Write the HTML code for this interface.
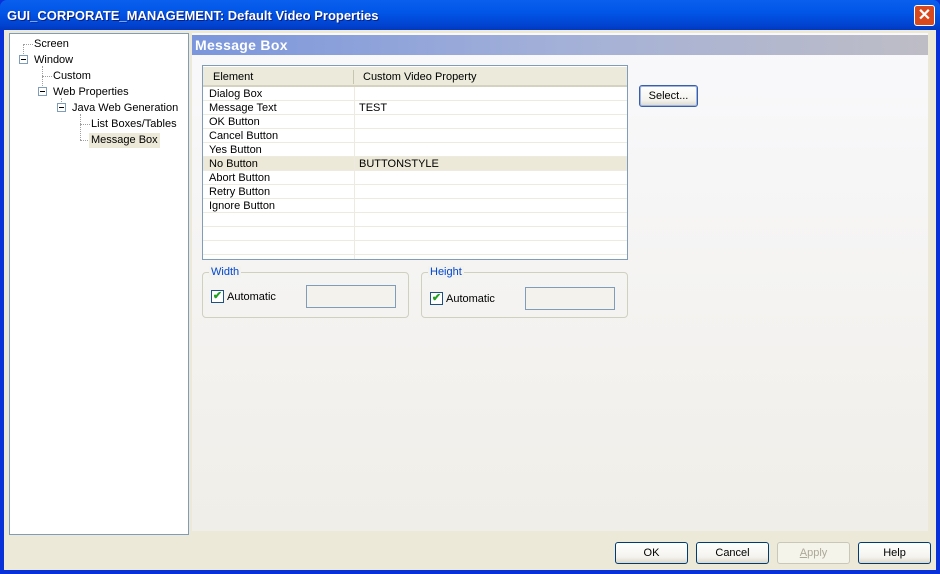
<!DOCTYPE html>
<html><head><style>
*{box-sizing:border-box;margin:0;padding:0}
body{width:940px;height:574px;overflow:hidden;font-family:"Liberation Sans",Tahoma,sans-serif;font-size:11px;color:#000;background:#0831D9;position:relative}
.abs{position:absolute}
#title{left:0;top:0;width:940px;height:30px;background:linear-gradient(#0A5FEE,#0156E8 40%,#0142CF 85%,#0138BD);border-radius:7px 7px 0 0}
#title span{position:absolute;left:7px;top:8px;color:#fff;font-weight:bold;font-size:13px;font-family:"Liberation Sans",sans-serif;text-shadow:1px 1px #0a1f80}
#close{left:914px;top:5px;width:21px;height:21px;background:#D9491E;border:1px solid #fff;border-radius:3px;color:#fff;font-size:16px;font-weight:bold;text-align:center;line-height:19px}
#body{left:4px;top:30px;width:932px;height:540px;background:#ECE9D8}
#tree{left:9px;top:33px;width:180px;height:502px;background:#fff;border:1px solid #7F9DB9}
.t{position:absolute;white-space:nowrap;font-size:11px}
#tree .t{margin-top:1px}
.pm{position:absolute;width:9px;height:9px;border:1px solid #7F9DB9;background:#fff}
.pm:after{content:"";position:absolute;left:1px;top:3px;width:5px;height:1px;background:#000}
.dh{position:absolute;border-top:1px dotted #a0a0a0;height:0}
.dv{position:absolute;border-left:1px dotted #a0a0a0;width:0}
#right{left:192px;top:33px;width:736px;height:498px;background:linear-gradient(#F9F9FC,#F0EEE8)}
#hdr{left:192px;top:35px;width:736px;height:20px;background:linear-gradient(90deg,#7B96DC,#A3B0D8 50%,#BEBDC6);color:#fff;font-weight:bold;font-size:14px;padding:2px 3px;font-family:"Liberation Sans",sans-serif;letter-spacing:0.3px}
#tbl{left:202px;top:65px;width:426px;height:195px;border:1px solid #7F9DB9;background:#fff;overflow:hidden}
.row{position:absolute;left:0;width:424px;height:14px;border-bottom:1px solid #EDEBE0}
.row span{position:absolute;top:1px;line-height:13px}
.btn{position:absolute;height:22px;border:1px solid #003C74;border-radius:3px;background:linear-gradient(#fff,#F4F3EE 70%,#DCD8C8);text-align:center;line-height:21px}
.grp{position:absolute;border:1px solid #D0D0BF;border-radius:4px}
.grp .lg{position:absolute;top:-7px;left:6px;background:#F3F2ED;color:#0046D5;padding:0 2px}
.cb{position:absolute;width:13px;height:13px;border:1px solid #1C5180;background:#fff;color:#21A121;font-size:11px;line-height:11px;text-align:center;font-weight:bold}
.ed{position:absolute;border:1px solid #7F9DB9;background:#F3F2ED}
</style></head><body>
<div id="title" class="abs"><span>GUI_CORPORATE_MANAGEMENT: Default Video Properties</span></div>
<div id="close" class="abs">✕</div>
<div id="body" class="abs"></div>
<div id="tree" class="abs">
 <div class="dh" style="left:13px;top:10px;width:10px"></div>
 <div class="dv" style="left:13px;top:10px;height:16px"></div>
 <div class="t" style="left:24px;top:3px">Screen</div>
 <div class="pm" style="left:9px;top:21px"></div>
 <div class="t" style="left:24px;top:19px">Window</div>
 <div class="dv" style="left:32px;top:32px;height:28px"></div>
 <div class="dh" style="left:32px;top:42px;width:10px"></div>
 <div class="t" style="left:43px;top:35px">Custom</div>
 <div class="pm" style="left:28px;top:53px"></div>
 <div class="t" style="left:43px;top:51px">Web Properties</div>
 <div class="dv" style="left:51px;top:64px;height:6px"></div>
 <div class="pm" style="left:47px;top:69px"></div>
 <div class="t" style="left:62px;top:67px">Java Web Generation</div>
 <div class="dv" style="left:70px;top:80px;height:26px"></div>
 <div class="dh" style="left:70px;top:90px;width:10px"></div>
 <div class="dh" style="left:70px;top:106px;width:10px"></div>
 <div class="t" style="left:81px;top:83px">List Boxes/Tables</div>
 <div class="t" style="left:79px;top:98px;background:#ECE9D8;padding:0 2px;height:15px;line-height:15px">Message Box</div>
</div>
<div id="right" class="abs"></div>
<div id="hdr" class="abs">Message Box</div>
<div id="tbl" class="abs">
 <div style="position:absolute;left:0;top:1px;width:424px;height:20px;background:#EBEADB;border-bottom:2px solid #D6D2C2"></div>
 <div style="position:absolute;left:150px;top:4px;width:1px;height:14px;background:#C7C5B2"></div>
 <span class="t" style="left:10px;top:5px">Element</span>
 <span class="t" style="left:160px;top:5px">Custom Video Property</span>
 <div class="row" style="top:21px"><span style="left:6px">Dialog Box</span></div>
 <div class="row" style="top:35px"><span style="left:6px">Message Text</span><span style="left:156px">TEST</span></div>
 <div class="row" style="top:49px"><span style="left:6px">OK Button</span></div>
 <div class="row" style="top:63px"><span style="left:6px">Cancel Button</span></div>
 <div class="row" style="top:77px"><span style="left:6px">Yes Button</span></div>
 <div class="row" style="top:91px;background:#ECE9D8"><span style="left:6px">No Button</span><span style="left:156px">BUTTONSTYLE</span></div>
 <div class="row" style="top:105px"><span style="left:6px">Abort Button</span></div>
 <div class="row" style="top:119px"><span style="left:6px">Retry Button</span></div>
 <div class="row" style="top:133px"><span style="left:6px">Ignore Button</span></div>
 <div class="row" style="top:147px"></div>
 <div class="row" style="top:161px"></div>
 <div class="row" style="top:175px"></div>
 <div style="position:absolute;left:151px;top:21px;width:1px;height:175px;background:#EDEBE0"></div>
</div>
<div class="btn" style="left:639px;top:85px;width:59px;border-color:#3A5FA8;box-shadow:inset 0 0 0 1px #9DB4E4">Select...</div>
<div class="grp" style="left:202px;top:272px;width:207px;height:46px"><span class="lg">Width</span>
 <div class="cb" style="left:8px;top:17px">✔</div><span class="t" style="left:24px;top:18px">Automatic</span>
 <div class="ed" style="left:103px;top:12px;width:90px;height:23px"></div></div>
<div class="grp" style="left:421px;top:272px;width:207px;height:46px"><span class="lg">Height</span>
 <div class="cb" style="left:8px;top:19px">✔</div><span class="t" style="left:24px;top:20px">Automatic</span>
 <div class="ed" style="left:103px;top:14px;width:90px;height:23px"></div></div>
<div class="btn" style="left:615px;top:542px;width:73px">OK</div>
<div class="btn" style="left:696px;top:542px;width:73px">Cancel</div>
<div class="btn" style="left:777px;top:542px;width:73px;border-color:#C9C7BA;color:#ACA899;background:#F5F4EA"><u>A</u>pply</div>
<div class="btn" style="left:858px;top:542px;width:73px">Help</div>
</body></html>
